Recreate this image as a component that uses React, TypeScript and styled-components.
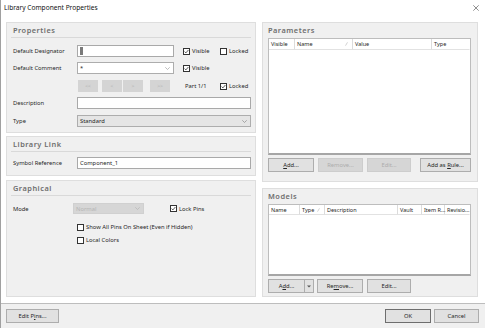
import React from 'react';
import styled, { createGlobalStyle } from 'styled-components';

const Global = createGlobalStyle`
  html, body { margin: 0; padding: 0; background: #fff; }
  body { font-family: "Noto Sans", "Open Sans", sans-serif; }
  * { box-sizing: border-box; }
`;

const Window = styled.div`
  width: 485px;
  height: 328px;
  background: #fff;
  display: flex;
  flex-direction: column;
  border-left: 1px solid #a0a0a0;
  overflow: hidden;
  color: #262626;
  font-size: 5.8px;
`;

const TitleBar = styled.div`
  height: 22px;
  flex: none;
  display: flex;
  justify-content: space-between;
  align-items: flex-start;
  padding: 3px 6px 0 3px;
  font-size: 6.6px;
  line-height: 10px;
  color: #111;
`;

const Close = styled.svg`
  width: 6px;
  height: 6px;
  margin-top: 2px;
`;

const Content = styled.div`
  flex: 1;
  display: grid;
  grid-template-columns: 250px 216px;
  column-gap: 6px;
  padding: 0 0 6px 5px;
`;

const Column = styled.div`
  display: flex;
  flex-direction: column;
`;

const Panel = styled.section<{ $h: number; $mt?: number }>`
  height: ${(p) => p.$h}px;
  margin-top: ${(p) => p.$mt ?? 0}px;
  background: #f0f0f0;
  border: 1px solid #dedede;
  display: flex;
  flex-direction: column;
`;

const PanelHeader = styled.div<{ $rule?: boolean; $pl?: number }>`
  height: 15px;
  margin: 0 4px;
  padding-left: ${(p) => p.$pl ?? 2}px;
  border-bottom: 1px solid ${(p) => (p.$rule ? '#d9d9d9' : 'transparent')};
  font-size: 7.4px;
  line-height: 14px;
  font-weight: 600;
  letter-spacing: 0.5px;
  color: #6e6e6e;
`;

const Body = styled.div<{ $pt: number; $pl?: number; $pr?: number }>`
  padding: ${(p) => p.$pt}px ${(p) => p.$pr ?? 4}px 0 ${(p) => p.$pl ?? 6}px;
  display: flex;
  flex-direction: column;
`;

const Row = styled.div<{ $mt?: number; $h?: number }>`
  display: flex;
  align-items: center;
  height: ${(p) => p.$h ?? 12}px;
  margin-top: ${(p) => p.$mt ?? 0}px;
`;

const Label = styled.div<{ $w?: number }>`
  width: ${(p) => p.$w ?? 64}px;
  flex: none;
  white-space: nowrap;
`;

const Input = styled.div<{ $w?: number; $h?: number }>`
  width: ${(p) => (p.$w ? `${p.$w}px` : 'auto')};
  flex: ${(p) => (p.$w ? 'none' : '1')};
  height: ${(p) => p.$h ?? 12}px;
  background: #fff;
  border: 1px solid #a9a9a9;
  display: flex;
  align-items: center;
  padding-left: 2px;
  white-space: nowrap;
`;

const Select = styled.div<{ $w?: number; $h?: number; $tone: 'white' | 'gray' | 'disabled' }>`
  width: ${(p) => (p.$w ? `${p.$w}px` : 'auto')};
  flex: ${(p) => (p.$w ? 'none' : '1')};
  height: ${(p) => p.$h ?? 12}px;
  background: ${(p) => (p.$tone === 'white' ? '#fff' : p.$tone === 'gray' ? '#e5e5e5' : '#d6d6d6')};
  border: 1px solid ${(p) => (p.$tone === 'disabled' ? '#d0d0d0' : '#adadad')};
  color: ${(p) => (p.$tone === 'disabled' ? '#b5b5b5' : '#262626')};
  display: flex;
  align-items: center;
  justify-content: space-between;
  padding: 0 3px 0 2px;
  white-space: nowrap;
`;

const Chevron = styled.svg`
  width: 5px;
  height: 3px;
  flex: none;
`;

const Selected = styled.span`
  background: #7a7a7a;
  width: 3px;
  height: 8px;
`;

const CheckWrap = styled.label<{ $ml?: number; $w?: number }>`
  display: flex;
  align-items: center;
  gap: 2px;
  margin-left: ${(p) => p.$ml ?? 0}px;
  width: ${(p) => (p.$w ? `${p.$w}px` : 'auto')};
  flex: none;
  white-space: nowrap;
`;

const Box = styled.span`
  width: 7px;
  height: 7px;
  border: 1px solid #333;
  background: #fff;
  display: flex;
  align-items: center;
  justify-content: center;
  flex: none;
`;

const NavButton = styled.div<{ $ml: number }>`
  width: 20px;
  height: 12px;
  margin-left: ${(p) => p.$ml}px;
  background: #d4d4d4;
  color: #b0b0b0;
  font-size: 5px;
  display: flex;
  align-items: center;
  justify-content: center;
  flex: none;
`;

const PartText = styled.div<{ $ml: number; $w: number }>`
  margin-left: ${(p) => p.$ml}px;
  width: ${(p) => p.$w}px;
  flex: none;
`;

const Table = styled.div<{ $h: number; $cols: string }>`
  height: ${(p) => p.$h}px;
  background: #fff;
  border: 1px solid #bdbdbd;
  border-bottom: 2px solid #a6a6a6;
  display: grid;
  grid-template-columns: ${(p) => p.$cols};
  grid-template-rows: ${(p) => (p.$h > 100 ? 11 : 10)}px 1fr;
`;

const HeadCell = styled.div<{ $last?: boolean }>`
  border-right: 1px solid ${(p) => (p.$last ? 'transparent' : '#dcdcdc')};
  border-bottom: 1px solid #e2e2e2;
  padding-left: 2px;
  display: flex;
  align-items: center;
  justify-content: space-between;
  white-space: nowrap;
  font-size: 5.5px;
  color: #262626;
`;

const SortMark = styled.svg`
  width: 3px;
  height: 4px;
  margin-right: 4px;
  flex: none;
`;

const ButtonRow = styled.div`
  display: flex;
  margin-top: 3px;
`;

const Button = styled.div<{ $w: number; $ml?: number; $disabled?: boolean; $default?: boolean }>`
  width: ${(p) => p.$w}px;
  height: 14px;
  margin-left: ${(p) => p.$ml ?? 0}px;
  flex: none;
  background: ${(p) => (p.$disabled ? '#d6d6d6' : '#e1e1e1')};
  border: 1px solid ${(p) => (p.$disabled ? '#cdcdcd' : p.$default ? '#6e6e6e' : '#adadad')};
  color: ${(p) => (p.$disabled ? '#adadad' : '#262626')};
  display: flex;
  align-items: center;
  justify-content: center;
  white-space: nowrap;
`;

const SplitArrow = styled.div`
  width: 9px;
  height: 14px;
  flex: none;
  background: #e1e1e1;
  border: 1px solid #adadad;
  border-left: none;
  display: flex;
  align-items: center;
  justify-content: center;
`;

const Footer = styled.div`
  height: 25px;
  flex: none;
  background: #f0f0f0;
  border-top: 1px solid #bdbdbd;
  display: flex;
  justify-content: space-between;
  padding: 5px 6px 0 5px;
`;

const FooterRight = styled.div`
  display: flex;
  gap: 3px;
`;

const U = styled.span`
  text-decoration: underline;
`;

const Check = ({ on }: { on?: boolean }) => (
  <Box>
    {on && (
      <svg width="5" height="5" viewBox="0 0 5 5">
        <polyline points="0.6,2.6 1.9,3.9 4.4,1" fill="none" stroke="#333" strokeWidth="0.8" />
      </svg>
    )}
  </Box>
);

const Chev = ({ color = '#8a8a8a' }: { color?: string }) => (
  <Chevron viewBox="0 0 5 3">
    <polyline points="0.3,0.3 2.5,2.5 4.7,0.3" fill="none" stroke={color} strokeWidth="0.7" />
  </Chevron>
);

const Sort = () => (
  <SortMark viewBox="0 0 3 4">
    <line x1="0.5" y1="3.7" x2="2.5" y2="0.3" stroke="#b5b5b5" strokeWidth="0.6" />
  </SortMark>
);

export default function App() {
  return (
    <>
      <Global />
      <Window>
        <TitleBar>
          <span>Library Component Properties</span>
          <Close viewBox="0 0 6 6">
            <path d="M0.3 0.3 L5.7 5.7 M5.7 0.3 L0.3 5.7" stroke="#444" strokeWidth="0.6" />
          </Close>
        </TitleBar>
        <Content>
          <Column>
            <Panel $h={111}>
              <PanelHeader $rule>Properties</PanelHeader>
              <Body $pt={7}>
                <Row>
                  <Label>Default Designator</Label>
                  <Input $w={97}>
                    <Selected />
                  </Input>
                  <CheckWrap $ml={9} $w={37}>
                    <Check on />
                    Visible
                  </CheckWrap>
                  <CheckWrap>
                    <Check />
                    Locked
                  </CheckWrap>
                </Row>
                <Row $mt={5}>
                  <Label>Default Comment</Label>
                  <Select $w={97} $tone="white">
                    <span>*</span>
                    <Chev color="#a0a0a0" />
                  </Select>
                  <CheckWrap $ml={9} $w={37}>
                    <Check on />
                    Visible
                  </CheckWrap>
                </Row>
                <Row $mt={6}>
                  <Label>&nbsp;</Label>
                  <NavButton $ml={1}>&lt;&lt;</NavButton>
                  <NavButton $ml={4}>&lt;</NavButton>
                  <NavButton $ml={1}>&gt;</NavButton>
                  <NavButton $ml={7}>&gt;&gt;</NavButton>
                  <PartText $ml={15} $w={35}>Part 1/1</PartText>
                  <CheckWrap>
                    <Check on />
                    Locked
                  </CheckWrap>
                </Row>
                <Row $mt={5}>
                  <Label>Description</Label>
                  <Input />
                </Row>
                <Row $mt={6}>
                  <Label>Type</Label>
                  <Select $tone="gray">
                    <span>Standard</span>
                    <Chev />
                  </Select>
                </Row>
              </Body>
            </Panel>
            <Panel $h={40} $mt={3}>
              <PanelHeader $rule>Library Link</PanelHeader>
              <Body $pt={5}>
                <Row $h={12}>
                  <Label>Symbol Reference</Label>
                  <Input $h={12}>Component_1</Input>
                </Row>
              </Body>
            </Panel>
            <Panel $h={117} $mt={4}>
              <PanelHeader $rule>Graphical</PanelHeader>
              <Body $pt={7}>
                <Row $h={11}>
                  <Label $w={60}>Mode</Label>
                  <Select $w={71} $h={11} $tone="disabled">
                    <span>Normal</span>
                    <Chev color="#b5b5b5" />
                  </Select>
                  <CheckWrap $ml={26}>
                    <Check on />
                    Lock Pins
                  </CheckWrap>
                </Row>
                <Row $h={10} $mt={8}>
                  <Label>&nbsp;</Label>
                  <CheckWrap>
                    <Check />
                    Show All Pins On Sheet (Even if Hidden)
                  </CheckWrap>
                </Row>
                <Row $h={10} $mt={3}>
                  <Label>&nbsp;</Label>
                  <CheckWrap>
                    <Check />
                    Local Colors
                  </CheckWrap>
                </Row>
              </Body>
            </Panel>
          </Column>
          <Column>
            <Panel $h={160}>
              <PanelHeader $pl={1}>Parameters</PanelHeader>
              <Body $pt={0} $pl={5} $pr={6}>
                <Table $h={117} $cols="26px 58px 79px 1fr">
                  <HeadCell>Visible</HeadCell>
                  <HeadCell>
                    Name
                    <Sort />
                  </HeadCell>
                  <HeadCell>Value</HeadCell>
                  <HeadCell $last>Type</HeadCell>
                </Table>
                <ButtonRow>
                  <Button $w={46}>
                    <U>A</U>dd...
                  </Button>
                  <Button $w={45} $ml={4} $disabled>
                    Remove...
                  </Button>
                  <Button $w={44} $ml={4} $disabled>
                    Edit...
                  </Button>
                  <Button $w={51} $ml={9}>
                    Add as&nbsp;<U>R</U>ule...
                  </Button>
                </ButtonRow>
              </Body>
            </Panel>
            <Panel $h={109} $mt={6}>
              <PanelHeader $pl={1}>Models</PanelHeader>
              <Body $pt={0} $pl={5} $pr={6}>
                <Table $h={72} $cols="31px 25px 73px 24px 23px 1fr">
                  <HeadCell>Name</HeadCell>
                  <HeadCell>
                    Type
                    <Sort />
                  </HeadCell>
                  <HeadCell>Description</HeadCell>
                  <HeadCell>Vault</HeadCell>
                  <HeadCell>Item R...</HeadCell>
                  <HeadCell $last>Revisio...</HeadCell>
                </Table>
                <ButtonRow>
                  <Button $w={37}>
                    A<U>d</U>d...
                  </Button>
                  <SplitArrow>
                    <svg width="4" height="3" viewBox="0 0 4 3">
                      <polygon points="0,0.5 4,0.5 2,2.6" fill="#555" />
                    </svg>
                  </SplitArrow>
                  <Button $w={46} $ml={3}>
                    Re<U>m</U>ove...
                  </Button>
                  <Button $w={44} $ml={4}>
                    Edit...
                  </Button>
                </ButtonRow>
              </Body>
            </Panel>
          </Column>
        </Content>
        <Footer>
          <Button $w={53}>
            Edit P<U>i</U>ns...
          </Button>
          <FooterRight>
            <Button $w={46} $default>
              OK
            </Button>
            <Button $w={45}>Cancel</Button>
          </FooterRight>
        </Footer>
      </Window>
    </>
  );
}
